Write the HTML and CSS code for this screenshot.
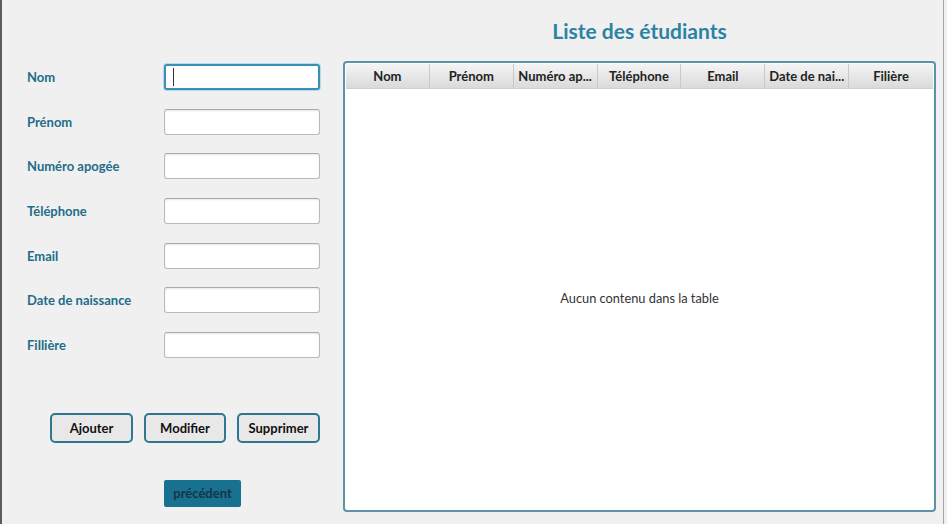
FILE: index.html
```html
<!DOCTYPE html>
<html lang="fr">
<head>
<meta charset="utf-8">
<title>Liste des étudiants</title>
<link rel="stylesheet" href="styles.css">
</head>
<body>
<div class="app">
  <div class="left">
    <div class="form">
      <label class="lbl">Nom</label>
      <span class="field focus"><input class="inp" type="text"></span>
      <label class="lbl">Prénom</label>
      <span class="field"><input class="inp" type="text"></span>
      <label class="lbl">Numéro apogée</label>
      <span class="field"><input class="inp" type="text"></span>
      <label class="lbl">Téléphone</label>
      <span class="field"><input class="inp" type="text"></span>
      <label class="lbl">Email</label>
      <span class="field"><input class="inp" type="text"></span>
      <label class="lbl">Date de naissance</label>
      <span class="field"><input class="inp" type="text"></span>
      <label class="lbl">Fillière</label>
      <span class="field"><input class="inp" type="text"></span>
    </div>
    <div class="actions">
      <button class="btn b1">Ajouter</button>
      <button class="btn b2">Modifier</button>
      <button class="btn b3">Supprimer</button>
    </div>
    <div class="back-row">
      <button class="back">précédent</button>
    </div>
  </div>
  <div class="right">
    <h1 class="title">Liste des étudiants</h1>
    <div class="table">
      <div class="thead">
        <div class="th">Nom</div>
        <div class="th">Prénom</div>
        <div class="th">Numéro ap...</div>
        <div class="th">Téléphone</div>
        <div class="th">Email</div>
        <div class="th">Date de nai...</div>
        <div class="th">Filière</div>
      </div>
      <div class="tbody">Aucun contenu dans la table</div>
    </div>
  </div>
  <div class="edge"></div>
</div>
</body>
</html>
```
FILE: styles.css
```css
html, body {
  margin: 0;
  padding: 0;
  background: #f0f0f0;
}
body {
  font-family: Lato, "Open Sans", sans-serif;
  width: 947px;
  height: 524px;
  overflow: hidden;
}
.app {
  display: flex;
  height: 524px;
  border-left: 2px solid #5c5c5c;
  box-sizing: border-box;
}
.left {
  width: 339px;
  flex: none;
  display: flex;
  flex-direction: column;
}
.form {
  display: grid;
  grid-template-columns: 137px 156px;
  grid-auto-rows: 26px;
  row-gap: 18.67px;
  padding-left: 25px;
  padding-top: 64px;
  align-items: center;
}
.lbl {
  font-weight: 700;
  font-size: 13px;
  color: #226d89;
}
.field {
  position: relative;
  display: block;
  height: 26px;
}
.inp {
  display: block;
  box-sizing: border-box;
  width: 156px;
  height: 26px;
  margin: 0;
  border: 1px solid #bababa;
  border-top-color: #a9a9a9;
  border-radius: 3px;
  background: #fff;
  box-shadow: inset 0 1px 2px rgba(0,0,0,0.1);
  outline: none;
  padding: 0 8px;
}
.focus .inp {
  border: 2px solid #3a8fb7;
  box-shadow: 0 0 0 1px #b8dbea;
}
.focus::after {
  content: "";
  position: absolute;
  left: 9px;
  top: 4px;
  width: 1px;
  height: 18px;
  background: #333;
}
.actions {
  display: flex;
  gap: 11px;
  padding-left: 48px;
  margin-top: 55px;
}
.btn {
  box-sizing: border-box;
  height: 30px;
  border: 2px solid #2f7690;
  border-radius: 5px;
  background: #e8e8e8;
  font-family: Lato, "Open Sans", sans-serif;
  font-weight: 700;
  font-size: 13px;
  color: #111;
  padding: 0;
}
.b1 { width: 83px; }
.b2 { width: 82px; }
.b3 { width: 83px; }
.back-row {
  padding-left: 162px;
  margin-top: 37px;
}
.back {
  box-sizing: border-box;
  width: 77px;
  height: 27px;
  border: none;
  border-radius: 2px;
  background: #17718f;
  color: #16344a;
  font-family: Lato, "Open Sans", sans-serif;
  font-weight: 700;
  font-size: 13px;
  padding: 0;
}
.right {
  width: 593px;
  flex: none;
  margin-left: 2px;
  display: flex;
  flex-direction: column;
}
.title {
  margin: 19px 0 0;
  height: 24px;
  text-align: center;
  font-size: 21px;
  font-weight: 700;
  color: #2b83a4;
  line-height: 24px;
}
.table {
  margin-top: 18px;
  height: 451px;
  box-sizing: border-box;
  border: 2px solid #5e93a7;
  border-radius: 4px;
  background: #fff;
  padding: 1px;
  display: flex;
  flex-direction: column;
}
.thead {
  display: grid;
  grid-template-columns: repeat(7, 1fr);
  height: 25px;
  background: linear-gradient(#f4f4f4, #dadada);
  border-bottom: 1px solid #cfcfcf;
  box-sizing: border-box;
}
.th {
  border-right: 1px solid #c9c9c9;
  font-weight: 700;
  font-size: 13px;
  color: #222;
  text-align: center;
  line-height: 24px;
  white-space: nowrap;
  overflow: hidden;
}
.th:last-child { border-right: none; }
.tbody {
  flex: 1;
  display: flex;
  align-items: center;
  justify-content: center;
  font-size: 12.8px;
  color: #333;
  padding-bottom: 2px;
}
.edge {
  width: 1px;
  margin-left: 7px;
  background: #a5a5a5;
  flex: none;
}
```
